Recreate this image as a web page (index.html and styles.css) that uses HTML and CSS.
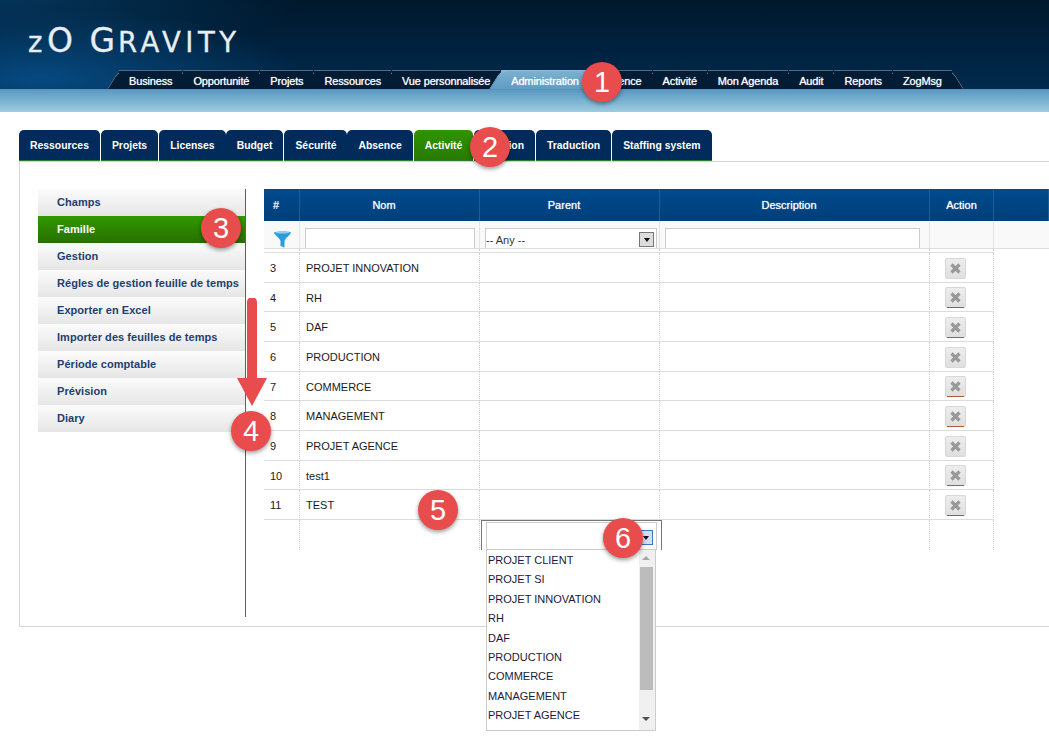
FILE: index.html
```html
<!DOCTYPE html>
<html lang="fr">
<head>
  <meta charset="UTF-8"/>
  <title>zO Gravity - Administration</title>
  <link rel="stylesheet" href="styles.css">
</head>
<body>
<!-- Top banner with logo and main tabs -->
<header class="banner">
  <div class="logo"><span class="logo-small">z</span><span class="logo-big">O G</span><span class="logo-small">RAVITY</span></div>
  <nav class="main-nav">
    <a class="main-tab">Business</a>
    <a class="main-tab">Opportunité</a>
    <a class="main-tab">Projets</a>
    <a class="main-tab">Ressources</a>
    <a class="main-tab">Vue personnalisée</a>
    <a class="main-tab active">Administration</a>
    <a class="main-tab">Absence</a>
    <a class="main-tab">Activité</a>
    <a class="main-tab">Mon Agenda</a>
    <a class="main-tab">Audit</a>
    <a class="main-tab">Reports</a>
    <a class="main-tab">ZogMsg</a>
  </nav>
</header>
<div class="band"></div>

<!-- Second level tabs -->
<nav class="sub-nav">
  <a class="sub-tab">Ressources</a>
  <a class="sub-tab">Projets</a>
  <a class="sub-tab joined">Licenses</a>
  <a class="sub-tab">Budget</a>
  <a class="sub-tab joined">Sécurité</a>
  <a class="sub-tab">Absence</a>
  <a class="sub-tab active">Activité</a>
  <a class="sub-tab">Gestion</a>
  <a class="sub-tab">Traduction</a>
  <a class="sub-tab">Staffing system</a>
</nav>

<main class="panel">
  <!-- Left menu -->
  <aside class="side">
    <ul class="side-menu">
      <li>Champs</li>
      <li class="active">Famille</li>
      <li>Gestion</li>
      <li>Régles de gestion feuille de temps</li>
      <li>Exporter en Excel</li>
      <li>Importer des feuilles de temps</li>
      <li>Période comptable</li>
      <li>Prévision</li>
      <li>Diary</li>
    </ul>
  </aside>

  <!-- Family grid -->
  <table class="grid">
    <thead>
      <tr>
        <th class="col-id">#</th>
        <th class="col-name">Nom</th>
        <th class="col-parent">Parent</th>
        <th class="col-desc">Description</th>
        <th class="col-action">Action</th>
        <th class="col-rest"></th>
      </tr>
    </thead>
    <tbody>
      <tr class="filter-row">
        <td>
          <svg class="funnel" width="17" height="17" viewBox="0 0 17 17"><path d="M0 1.500C0 0 17 0 17 1.500C17 3 11 7.500 10.500 10V16.500L6.500 15V10C6 7.500 0 3 0 1.500Z" fill="#2a9bdf"/><ellipse cx="8.500" cy="1.500" rx="7" ry="0.900" fill="#8fd0f2"/></svg>
        </td>
        <td><div class="filter-input"></div></td>
        <td>
          <div class="filter-input filter-select">-- Any --<span class="select-btn"><i class="caret"></i></span></div>
        </td>
        <td><div class="filter-input filter-desc"></div></td>
        <td></td>
        <td class="rest"></td>
      </tr>
      <tr class="gap-row"><td></td><td></td><td></td><td></td><td></td><td class="rest"></td></tr>

      <tr class="row"><td>3</td><td>PROJET INNOVATION</td><td></td><td></td><td><button class="del"><svg width="11" height="11" viewBox="0 0 11 11"><path d="M1.500 1.500L9.500 9.500M9.500 1.500L1.500 9.500"/></svg></button></td><td class="rest"></td></tr>
      <tr class="row short"><td>4</td><td>RH</td><td></td><td></td><td><button class="del used"><svg width="11" height="11" viewBox="0 0 11 11"><path d="M1.500 1.500L9.500 9.500M9.500 1.500L1.500 9.500"/></svg></button></td><td class="rest"></td></tr>
      <tr class="row"><td>5</td><td>DAF</td><td></td><td></td><td><button class="del used"><svg width="11" height="11" viewBox="0 0 11 11"><path d="M1.500 1.500L9.500 9.500M9.500 1.500L1.500 9.500"/></svg></button></td><td class="rest"></td></tr>
      <tr class="row"><td>6</td><td>PRODUCTION</td><td></td><td></td><td><button class="del"><svg width="11" height="11" viewBox="0 0 11 11"><path d="M1.500 1.500L9.500 9.500M9.500 1.500L1.500 9.500"/></svg></button></td><td class="rest"></td></tr>
      <tr class="row short"><td>7</td><td>COMMERCE</td><td></td><td></td><td><button class="del used"><svg width="11" height="11" viewBox="0 0 11 11"><path d="M1.500 1.500L9.500 9.500M9.500 1.500L1.500 9.500"/></svg></button></td><td class="rest"></td></tr>
      <tr class="row"><td>8</td><td>MANAGEMENT</td><td></td><td></td><td><button class="del used"><svg width="11" height="11" viewBox="0 0 11 11"><path d="M1.500 1.500L9.500 9.500M9.500 1.500L1.500 9.500"/></svg></button></td><td class="rest"></td></tr>
      <tr class="row"><td>9</td><td>PROJET AGENCE</td><td></td><td></td><td><button class="del"><svg width="11" height="11" viewBox="0 0 11 11"><path d="M1.500 1.500L9.500 9.500M9.500 1.500L1.500 9.500"/></svg></button></td><td class="rest"></td></tr>
      <tr class="row short"><td>10</td><td>test1</td><td></td><td></td><td><button class="del used"><svg width="11" height="11" viewBox="0 0 11 11"><path d="M1.500 1.500L9.500 9.500M9.500 1.500L1.500 9.500"/></svg></button></td><td class="rest"></td></tr>
      <tr class="row"><td>11</td><td>TEST</td><td></td><td></td><td><button class="del used"><svg width="11" height="11" viewBox="0 0 11 11"><path d="M1.500 1.500L9.500 9.500M9.500 1.500L1.500 9.500"/></svg></button></td><td class="rest"></td></tr>

      <!-- New line with open parent list -->
      <tr class="row last-row">
        <td></td>
        <td></td>
        <td class="open-cell">
          <div class="open-select">
            <div class="open-field"><span class="open-btn"><i class="caret"></i></span></div>
            <div class="dropdown">
              <ul class="dropdown-list">
                <li>PROJET CLIENT</li>
                <li>PROJET SI</li>
                <li>PROJET INNOVATION</li>
                <li>RH</li>
                <li>DAF</li>
                <li>PRODUCTION</li>
                <li>COMMERCE</li>
                <li>MANAGEMENT</li>
                <li>PROJET AGENCE</li>
              </ul>
              <div class="scrollbar">
                <i class="scroll-up"></i>
                <div class="scroll-thumb"></div>
                <i class="scroll-down"></i>
              </div>
            </div>
          </div>
        </td>
        <td></td>
        <td></td>
        <td class="rest"></td>
      </tr>
    </tbody>
  </table>
</main>

<!-- Numbered callouts drawn over the screenshot -->
<svg class="arrow" width="32" height="112" viewBox="0 0 32 112"><path d="M16 4V80" stroke="#e84c4c" stroke-width="10" stroke-linecap="round"/><path d="M1 80H31L16 108Z" fill="#e84c4c"/></svg>
<span class="callout c1">1</span>
<span class="callout c2">2</span>
<span class="callout c3">3</span>
<span class="callout c4">4</span>
<span class="callout c5">5</span>
<span class="callout c6">6</span>
</body>
</html>
```

FILE: styles.css
```css
/* General layout */
html, body {
    margin: 0;
    padding: 0;
    overflow: hidden;
}

body {
    position: relative;
    height: 745px;
    background: #ffffff;
    font-family: "Liberation Sans", Arial, sans-serif;
    font-size: 11px;
    color: #1a1a1a;
}

/* Banner */
.banner {
    position: relative;
    height: 90px;
    box-sizing: border-box;
    background:
        radial-gradient(ellipse 260px 70px at 40px 78px, #06497f 0%, rgba(6, 73, 127, 0) 100%),
        radial-gradient(ellipse 300px 60px at 0 0, #04345a 0%, rgba(4, 52, 90, 0) 100%),
        linear-gradient(180deg, #00182c 0%, #012a4e 100%);
    border-bottom: 1px solid #5c92b8;
}

.logo {
    position: absolute;
    left: 28px;
    top: 24px;
    font-family: "DejaVu Sans", sans-serif;
    line-height: 34px;
    color: #e8eef2;
    -webkit-text-stroke: 0.300px #e8eef2;
    white-space: nowrap;
}

.logo-big {
    font-size: 33px;
    letter-spacing: 3px;
}

.logo-small {
    font-size: 27.500px;
    letter-spacing: 4.500px;
}

.main-nav {
    position: absolute;
    left: 119px;
    bottom: 0;
    z-index: 0;
    display: flex;
    height: 19px;
}

.main-tab {
    position: relative;
    height: 19px;
    padding: 0 10px;
    margin-right: 1px;
    line-height: 20px;
    font-size: 11px;
    letter-spacing: -0.150px;
    color: #ffffff;
    text-shadow: 0 0 1px rgba(255, 255, 255, 0.8);
    background: #021c35;
    border-top: 1px solid #4f6b82;
    box-sizing: border-box;
    white-space: nowrap;
}

.main-tab::before,
.main-tab::after {
    content: "";
    position: absolute;
    top: -1px;
    bottom: 0;
    width: 12px;
    background: #021c35;
    border-top: 1px solid #4f6b82;
    z-index: -1;
}

.main-tab::before {
    left: -6px;
    transform: skewX(-32deg);
    border-left: 1px solid #6c8496;
    border-radius: 7px 0 0 0;
}

.main-tab::after {
    right: -6px;
    transform: skewX(32deg);
    border-right: 1px solid #6c8496;
    border-radius: 0 7px 0 0;
}

.main-tab.active,
.main-tab.active::before,
.main-tab.active::after {
    background: linear-gradient(180deg, #7cb0cf 0%, #5f9cc4 100%);
    border-color: #8dbad4;
}

.main-tab.active {
    z-index: 1;
}

.band {
    height: 22px;
    background: linear-gradient(180deg, #5b99c3 0%, #9ccce0 100%);
}

/* Second level tabs */
.sub-nav {
    display: flex;
    margin: 18px 0 0 19px;
    height: 31px;
}

.sub-tab {
    margin-right: 1px;
    padding: 0 11px;
    line-height: 31px;
    font-size: 10.400px;
    font-weight: bold;
    color: #ffffff;
    background: #002b5a;
    border-bottom: 1px solid #2c7a2c;
    border-radius: 5px 5px 0 0;
    box-sizing: border-box;
    white-space: nowrap;
}

/* No white line between these and the next tab */
.sub-tab.joined {
    margin-right: 0;
}

.sub-tab.active {
    background: linear-gradient(180deg, #2f9500 0%, #287a00 100%);
}

/* Panel below the tabs */
.panel {
    display: flex;
    align-items: flex-start;
    margin-left: 19px;
    height: 466px;
    box-sizing: border-box;
    padding: 27px 0 0 18px;
    border-top: 1px solid #d6d6d6;
    border-left: 1px solid #d6d6d6;
    border-bottom: 1px solid #d6d6d6;
}

.side {
    flex: none;
    width: 208px;
    height: 428px;
    box-sizing: border-box;
    border-right: 1px solid #3d7a2a;
    margin-right: 18px;
}

.side-menu {
    list-style: none;
    margin: 0;
    padding: 0;
}

.side-menu li {
    height: 27px;
    line-height: 26px;
    padding-left: 19px;
    font-weight: bold;
    letter-spacing: 0.050px;
    color: #21406f;
    background: linear-gradient(180deg, #fbfbfb 0%, #e6e6e6 100%);
    white-space: nowrap;
}

.side-menu li.active {
    color: #ffffff;
    background: linear-gradient(180deg, #329800 0%, #276f00 100%);
}

/* Grid */
.grid {
    flex: none;
    width: 785px;
    table-layout: fixed;
    border-collapse: separate;
    border-spacing: 0;
}

.grid th {
    height: 32px;
    padding: 0 11px 0 0;
    box-sizing: border-box;
    font-size: 11px;
    font-weight: normal;
    color: #ffffff;
    text-shadow: 0 0 1px rgba(255, 255, 255, 0.8);
    background: linear-gradient(180deg, #004a8c 0%, #003f7a 100%);
    border-right: 1px solid #1d5e9a;
}

.col-id { width: 36px; }
.col-name { width: 180px; }
.col-parent { width: 180px; }
.col-desc { width: 270px; }
.col-action { width: 64px; }

.grid th.col-action,
.grid th.col-rest {
    padding: 0;
}

.grid td {
    padding: 0;
    box-sizing: border-box;
    vertical-align: middle;
    border-right: 1px dotted #cfcfcf;
    border-bottom: 1px solid #dcdcdc;
}

.filter-row td {
    height: 28px;
    background: #f9f9f9;
    border-right: 1px solid #e4e4e4;
    border-bottom: 1px solid #dedede;
    vertical-align: bottom;
}

.funnel {
    display: block;
    margin: 0 0 0 10px;
}

.filter-input {
    position: relative;
    height: 20px;
    margin: 0 4px 0 5px;
    box-sizing: border-box;
    background: #ffffff;
    border: 1px solid #cccccc;
    border-bottom: 0;
}

.filter-select {
    margin-right: 2px;
    line-height: 22px;
    color: #333333;
}

.filter-desc {
    margin-right: 9px;
}

.select-btn {
    position: absolute;
    right: 2px;
    top: 3px;
    width: 15px;
    height: 15px;
    box-sizing: border-box;
    display: flex;
    align-items: center;
    justify-content: center;
    background: #dddddd;
    border: 1px solid #777777;
}

.caret {
    display: block;
    width: 0;
    height: 0;
    border-left: 3px solid transparent;
    border-right: 3px solid transparent;
    border-top: 4px solid #111111;
}

.gap-row td {
    height: 4px;
    border-bottom: 1px solid #dedede;
}

.row td {
    height: 30px;
    padding-top: 1px;
    color: #1a1a1a;
}

.row.short td {
    height: 29px;
}

.row td:first-child {
    padding-left: 6px;
}

.row td:nth-child(2) {
    padding-left: 6px;
}

.grid td.rest {
    border: 0;
    background: #ffffff;
}

.filter-row td.rest {
    background: #f9f9f9;
    border-bottom: 1px solid #dedede;
}

.gap-row td.rest,
.row td.rest {
    border: 0;
}

.del {
    display: flex;
    align-items: center;
    justify-content: center;
    position: relative;
    width: 21px;
    height: 21px;
    margin-left: 15px;
    padding: 0;
    box-sizing: border-box;
    background: linear-gradient(180deg, #ededed 0%, #dfdfdf 100%);
    border: 1px solid #d8d8d8;
    border-radius: 2px;
}

.del svg {
    display: block;
}

.del path {
    stroke: #999999;
    stroke-width: 3.200;
    fill: none;
}

/* Some lines are still in use, shown by a brown underline */
.del.used::after {
    content: "";
    position: absolute;
    left: 1px;
    right: 1px;
    bottom: -1px;
    height: 1px;
    background: #b0573a;
}

.row.last-row td {
    border-bottom: 0;
}

.open-cell {
    position: relative;
}

.open-select {
    position: absolute;
    left: 1px;
    top: 0;
    width: 181px;
    height: 30px;
    box-sizing: border-box;
    border: 1px solid #777777;
    border-bottom: 0;
    background: #ffffff;
    z-index: 2;
}

.open-field {
    position: relative;
    height: 28px;
    margin: 1px 4px 0;
    box-sizing: border-box;
    border: 1px solid #cccccc;
    border-bottom: 0;
}

.open-btn {
    position: absolute;
    right: 3px;
    top: 7px;
    width: 15px;
    height: 15px;
    box-sizing: border-box;
    display: flex;
    align-items: center;
    justify-content: center;
    background: #cfe0f5;
    border: 1px solid #3f76c8;
}

/* Dropdown over the rows below */
.dropdown {
    position: absolute;
    left: 4px;
    top: 28px;
    width: 170px;
    height: 182px;
    box-sizing: border-box;
    display: flex;
    background: #ffffff;
    border: 1px solid #cccccc;
}

.dropdown-list {
    flex: 1;
    list-style: none;
    margin: 0;
    padding: 1px 0 0 1px;
}

.dropdown-list li {
    height: 19.400px;
    line-height: 19px;
    font-size: 11px;
    color: #1a1a3a;
}

.scrollbar {
    flex: none;
    width: 16px;
    box-sizing: border-box;
    padding-right: 2px;
    display: flex;
    flex-direction: column;
    align-items: center;
    background: #f0f0f0;
}

.scrollbar i {
    display: block;
    flex: none;
    width: 0;
    height: 0;
    border-left: 4px solid transparent;
    border-right: 4px solid transparent;
}

.scroll-up {
    margin: 6px 0 7px;
    border-bottom: 4px solid #a8a8a8;
}

.scroll-thumb {
    flex: none;
    width: 13px;
    height: 123px;
    background: #bcbcbc;
}

.scroll-down {
    margin-top: 27px;
    border-top: 4px solid #505050;
}

/* Numbered callouts */
.callout {
    position: absolute;
    width: 40px;
    height: 40px;
    border-radius: 50%;
    background: #e84c4c;
    color: #ffffff;
    font-size: 29px;
    line-height: 40px;
    text-align: center;
    box-shadow: 0 2px 4px rgba(0, 0, 0, 0.4);
    z-index: 5;
}

.c1 { left: 582px; top: 62px; }
.c2 { left: 470px; top: 127px; }
.c3 { left: 201px; top: 208px; }
.c4 { left: 231px; top: 411px; }
.c5 { left: 418px; top: 490px; }
.c6 { left: 603px; top: 518px; }

.arrow {
    position: absolute;
    left: 236px;
    top: 298px;
    z-index: 4;
}
```
